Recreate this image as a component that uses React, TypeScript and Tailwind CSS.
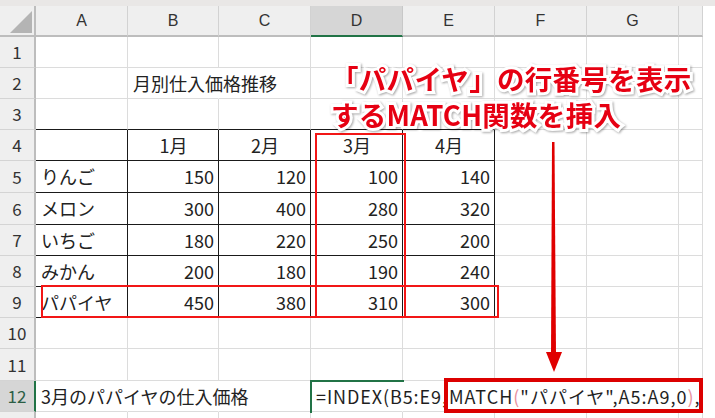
const COLS = [
  { key: "A", w: "w-[92px]" },
  { key: "B", w: "w-[91px]" },
  { key: "C", w: "w-[92px]" },
  { key: "D", w: "w-[92px]" },
  { key: "E", w: "w-[92px]" },
  { key: "F", w: "w-[92px]" },
  { key: "G", w: "w-[92px]" },
  { key: "", w: "w-[24px]" },
];

const ROW_H = ["h-[31px]", "h-[31px]", "h-[31px]", "h-[31px]", "h-[32px]", "h-[32px]", "h-[31px]", "h-[31px]", "h-[31px]", "h-[31px]", "h-[32px]", "h-[31px]", "h-[31px]"];

const fruits: [string, number, number, number, number][] = [
  ["りんご", 150, 120, 100, 140],
  ["メロン", 300, 400, 280, 320],
  ["いちご", 180, 220, 250, 200],
  ["みかん", 200, 180, 190, 240],
  ["パパイヤ", 450, 380, 310, 300],
];

// cells whose right gridline is covered by overflowing text
const hidden = new Set(["2-2", "12-1", "12-2", "12-4", "12-5", "12-6", "12-7", "12-8"]);

function borders(r: number, c: number) {
  const inTable = r >= 4 && r <= 9 && c >= 1 && c <= 5;
  const right = hidden.has(`${r}-${c}`) ? "border-r-transparent" : inTable ? "border-r-[#1a1a1a]" : "border-r-[#dcdcdc]";
  const bottom = c >= 1 && c <= 5 && r >= 3 && r <= 9 ? "border-b-[#1a1a1a]" : "border-b-[#dcdcdc]";
  return `${right} ${bottom}`;
}

function Formula() {
  return (
    <span className="whitespace-nowrap text-[#1f1f1f]">
      <span className="tracking-[0.9px]">=INDEX(B5:E9</span>
      <span>,</span>
      <span className="ml-[2px] tracking-[1px]">
        MATCH<span className="text-[#e8909c]">(</span>"パパイヤ",A5:A9,0<span className="text-[#e8909c]">)</span>,
      </span>
    </span>
  );
}

function cellContent(r: number, c: number) {
  if (r === 2 && c === 2) return <span className="whitespace-nowrap">月別仕入価格推移</span>;
  if (r === 4 && c >= 2 && c <= 5) return <span className="w-full text-center">{c - 1}月</span>;
  if (r >= 5 && r <= 9 && c >= 1 && c <= 5) {
    const row = fruits[r - 5];
    if (c === 1) return <span className="whitespace-nowrap">{row[0]}</span>;
    return <span className="w-full text-right">{row[c - 1]}</span>;
  }
  if (r === 12 && c === 1) return <span className="whitespace-nowrap">3月のパパイヤの仕入価格</span>;
  if (r === 12 && c === 4)
    return (
      <>
        <span className="absolute -top-px -left-px w-[94px] h-[33px] border-t-2 border-l-2 border-[#217346]" />
        <Formula />
      </>
    );
  return null;
}

export default function App() {
  return (
    <div className="relative w-[715px] h-[418px] overflow-hidden bg-white font-['Noto_Sans_CJK_JP',sans-serif] text-[#222]">
      <div className="h-[6px] bg-[#e9e7e6]" />

      {/* column headers */}
      <div className="flex h-[31px]">
        <div className="w-[36px] shrink-0 bg-[#efefef] border-r-2 border-b-2 border-[#bdbdbd] flex items-end justify-end p-[2px]">
          <svg width="22" height="22" viewBox="0 0 22 22">
            <polygon points="22,0 22,22 0,22" fill="#b4b4b4" />
          </svg>
        </div>
        {COLS.map((col, j) => (
          <div
            key={j}
            className={`${col.w} shrink-0 flex items-center justify-center border-r text-[16px] font-['Liberation_Sans',sans-serif] ${
              col.key === "D"
                ? "bg-[#d6d6d6] border-r-[#c8c8c8] border-b-2 border-b-[#217346] text-[#333]"
                : "bg-[#efefef] border-r-[#d2d2d2] border-b-2 border-b-[#bdbdbd] text-[#333]"
            }`}
          >
            {col.key}
          </div>
        ))}
      </div>

      {/* rows */}
      {ROW_H.map((h, i) => {
        const r = i + 1;
        return (
          <div key={r} className={`flex ${h}`}>
            <div
              className={`w-[36px] shrink-0 flex items-center justify-center text-[17px] border-b border-b-[#d4d4d4] ${
                r === 12 ? "bg-[#d6d6d6] text-[#2b5e45] border-r-2 border-r-[#217346]" : "bg-[#efefef] text-[#333] border-r-2 border-r-[#bdbdbd]"
              }`}
            >
              {r <= 12 ? r : ""}
            </div>
            {COLS.map((col, j) => {
              const c = j + 1;
              return (
                <div
                  key={j}
                  className={`${col.w} shrink-0 relative flex items-center pl-[5px] pr-[4px] text-[18px] border-r border-b ${borders(r, c)} ${
                    r === 12 && c === 4 ? "z-10" : r === 2 || r === 12 ? "z-[1]" : ""
                  }`}
                >
                  {cellContent(r, c)}
                </div>
              );
            })}
          </div>
        );
      })}

      {/* annotations */}
      <div className="absolute left-[315px] top-[133px] w-[91px] h-[185px] border-2 border-[#f21616] z-20" />
      <div className="absolute left-[41px] top-[285px] w-[458px] h-[33px] border-2 border-[#f21616] z-20" />
      <div className="absolute left-[444px] top-[378px] w-[259px] h-[35px] border-4 border-[#dc0000] z-20" />

      <svg className="absolute left-[544px] top-[140px] z-20" width="20" height="234" viewBox="0 0 20 234">
        <polygon points="8,2 10.5,2 12,214 7,214" fill="#e00000" />
        <polygon points="2,212 18,212 10,232" fill="#e00000" />
      </svg>

      <div className="absolute left-[331px] top-[60px] z-30 text-[27.5px] leading-[36px] font-bold tracking-[0.3px] text-[#e60012] whitespace-nowrap [paint-order:stroke_fill] [-webkit-text-stroke:6px_#ffffff] [filter:drop-shadow(1px_1px_1px_rgba(0,0,0,0.35))]">
        <div>「パパイヤ」の行番号を表示</div>
        <div>するMATCH関数を挿入</div>
      </div>
    </div>
  );
}
